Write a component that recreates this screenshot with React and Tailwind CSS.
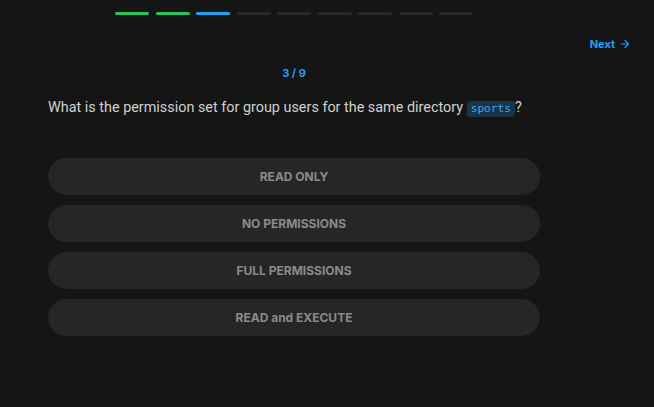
import { ArrowRight } from "lucide-react";

const steps = ["done", "done", "current", "todo", "todo", "todo", "todo", "todo", "todo"];

const options = ["READ ONLY", "NO PERMISSIONS", "FULL PERMISSIONS", "READ and EXECUTE"];

export default function App() {
  return (
    <div
      className="min-h-[407px] w-full bg-[#151515] text-[#d4d4d4]"
      style={{ fontFamily: "Inter, 'Noto Sans', sans-serif" }}
    >
      {/* progress */}
      <div className="ml-[48px] flex w-[492px] justify-center pt-[12px]">
        <div className="flex gap-[6.5px]">
          {steps.map((s, i) => (
            <div
              key={i}
              className={`h-[3px] w-[34px] rounded-full ${
                s === "done" ? "bg-[#22c55e]" : s === "current" ? "bg-[#1ea1f5]" : "bg-[#282828]"
              }`}
            />
          ))}
        </div>
      </div>

      {/* next */}
      <div className="mt-[21px] flex justify-end pr-[23px]">
        <button type="button" className="flex items-center gap-[4px] text-[11px] font-bold text-[#1ea1f5]">
          Next
          <ArrowRight className="h-[12px] w-[12px]" strokeWidth={2.25} aria-hidden="true" />
        </button>
      </div>

      <div className="ml-[48px] w-[492px]">
        <p className="mt-[12px] text-center text-[11px] font-bold text-[#1ea1f5]">3 / 9</p>

        <p
          className="mt-[16px] text-[14.4px] leading-[22px] text-[#d0d0d0]"
          style={{ fontFamily: "Roboto, Inter, sans-serif" }}
        >
          What is the permission set for group users for the same directory{" "}
          <code
            className="inline-block h-[16px] rounded-[3px] bg-[#1a3447] px-[4px] text-[11.2px] leading-[16px] text-[#3ba7ef]"
            style={{ fontFamily: "'DejaVu Sans Mono', 'Liberation Mono', monospace" }}
          >
            sports
          </code>
          ?
        </p>

        <div className="mt-[39px] flex flex-col gap-[10px]">
          {options.map((o) => (
            <button
              key={o}
              type="button"
              className="h-[37px] w-full rounded-full bg-[#262626] text-[12px] font-bold text-[#8a8a8a]"
            >
              {o}
            </button>
          ))}
        </div>
      </div>
    </div>
  );
}
